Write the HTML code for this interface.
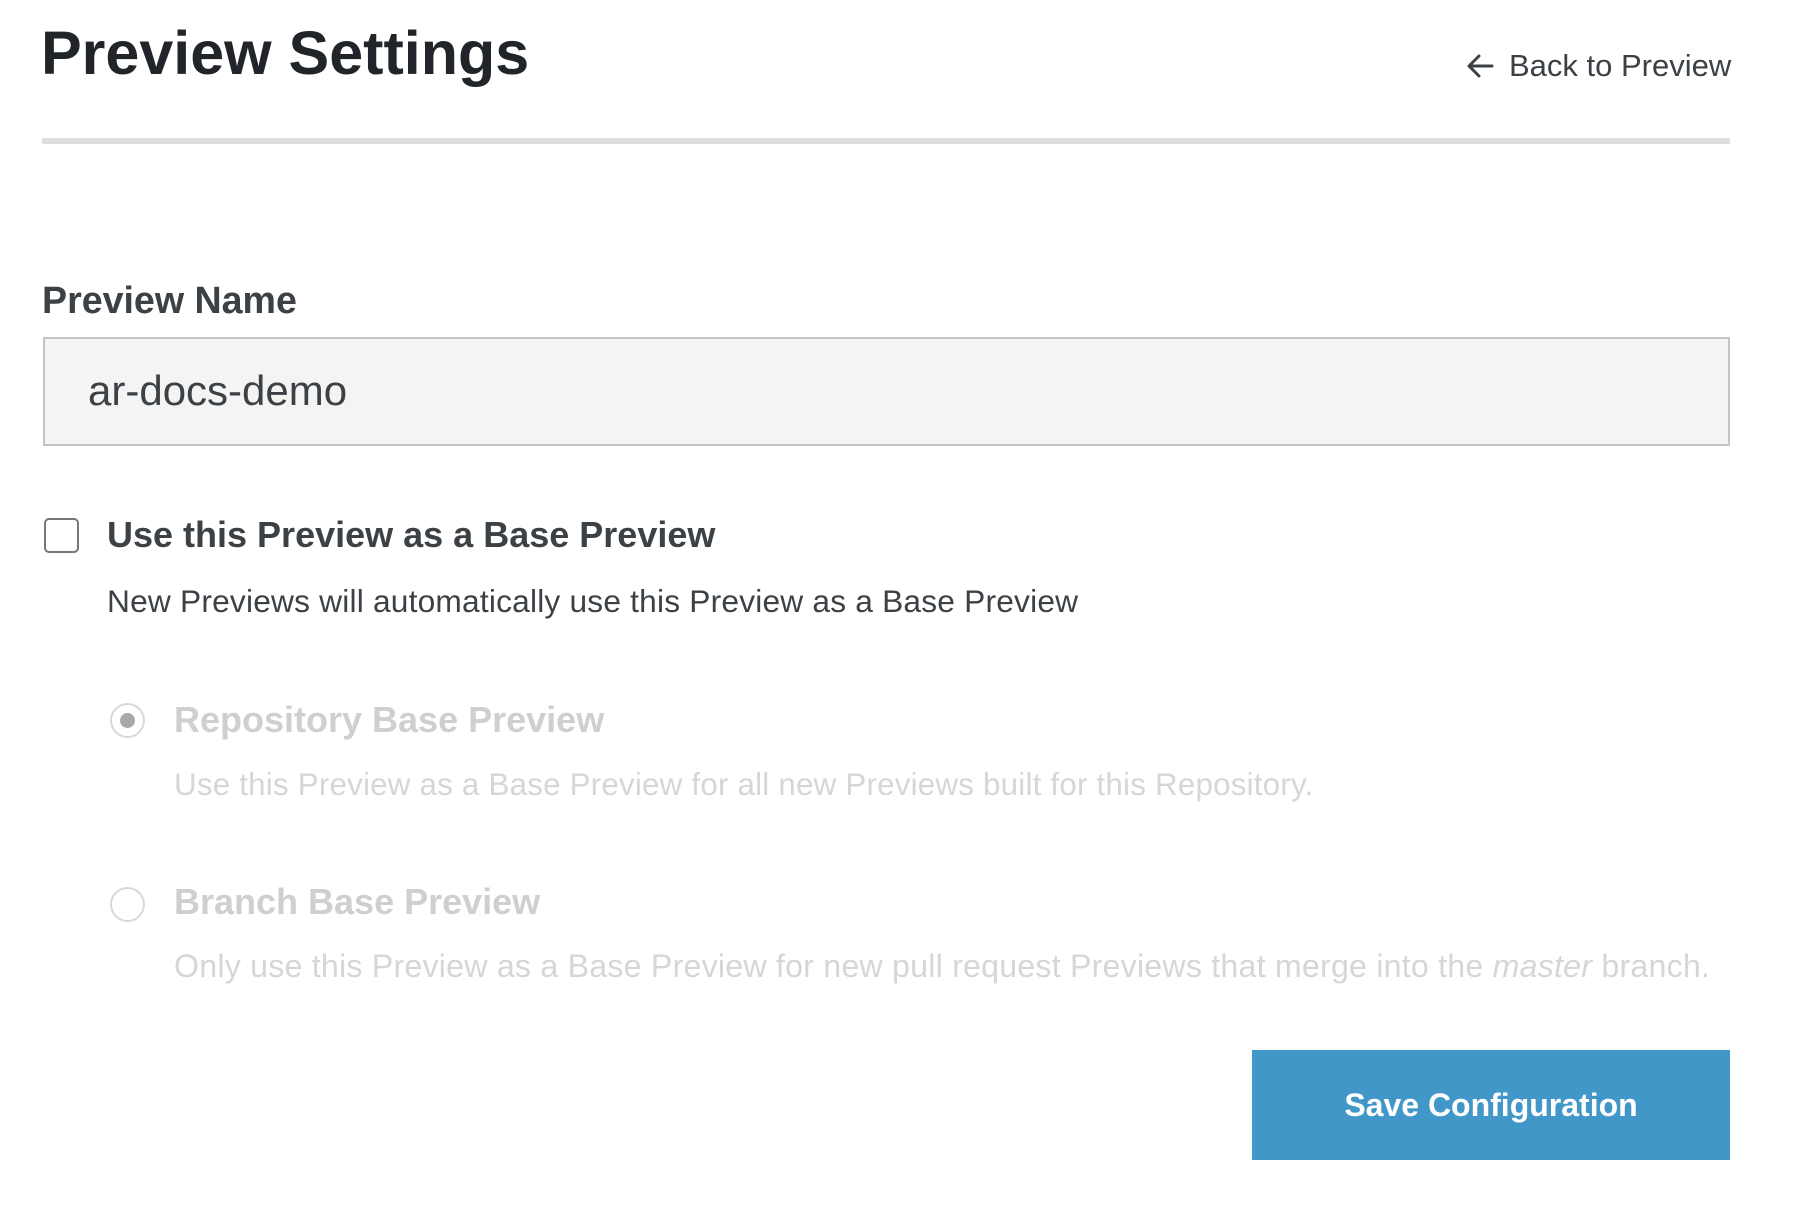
<!DOCTYPE html>
<html><head><meta charset="utf-8"><style>
*{margin:0;padding:0;box-sizing:border-box}
body{width:1804px;height:1210px;background:#fff;position:relative;overflow:hidden;font-family:"Liberation Sans",sans-serif;color:#3c4146}
.a{position:absolute;white-space:nowrap;line-height:1}
</style></head><body>
<div class="a" style="left:41px;top:22px;font-size:61px;font-weight:bold;color:#212529;line-height:62px">Preview Settings</div>
<svg class="a" style="left:1466px;top:53px" width="28" height="26" viewBox="0 0 28 26"><path d="M26 13H4M13 3L3 13l10 10" fill="none" stroke="#3c4146" stroke-width="3" stroke-linecap="round" stroke-linejoin="round"/></svg>
<div class="a" style="left:1509px;top:50px;font-size:31px;line-height:32px">Back to Preview</div>
<div class="a" style="left:42px;top:138px;width:1688px;height:6px;background:#dedede"></div>
<div class="a" style="left:42px;top:281px;font-size:37.6px;font-weight:bold;line-height:38px">Preview Name</div>
<div class="a" style="left:43px;top:337px;width:1687px;height:109px;background:#f4f4f4;border:2px solid #c4c4c4"></div>
<div class="a" style="left:88px;top:370px;font-size:42px;line-height:42px;color:#3c4146">ar-docs-demo</div>
<div class="a" style="left:44px;top:518px;width:35px;height:35px;border:2px solid #777;border-radius:5px"></div>
<div class="a" style="left:107px;top:516px;font-size:36px;font-weight:bold;line-height:38px">Use this Preview as a Base Preview</div>
<div class="a" style="left:107px;top:584px;font-size:31.7px;line-height:34px;letter-spacing:0.2px">New Previews will automatically use this Preview as a Base Preview</div>
<div class="a" style="left:110px;top:703px;width:35px;height:35px;border:2px solid #d8d8d8;border-radius:50%"></div>
<div class="a" style="left:120px;top:713px;width:15px;height:15px;background:#a8a8a8;border-radius:50%"></div>
<div class="a" style="left:174px;top:701px;font-size:36px;font-weight:bold;line-height:38px;color:#cfcfcf">Repository Base Preview</div>
<div class="a" style="left:174px;top:768px;font-size:31.35px;line-height:34px;color:#d6d6d6;letter-spacing:0.2px">Use this Preview as a Base Preview for all new Previews built for this Repository.</div>
<div class="a" style="left:110px;top:887px;width:35px;height:35px;border:2px solid #d8d8d8;border-radius:50%"></div>
<div class="a" style="left:174px;top:883px;font-size:36px;font-weight:bold;line-height:38px;color:#cfcfcf">Branch Base Preview</div>
<div class="a" style="left:174px;top:949px;font-size:32.2px;line-height:34px;color:#d6d6d6;letter-spacing:0.2px">Only use this Preview as a Base Preview for new pull request Previews that merge into the <i>master</i> branch.</div>
<div class="a" style="left:1252px;top:1050px;width:478px;height:110px;background:#4297c9;color:#fff;font-size:32px;font-weight:bold;line-height:110px;text-align:center">Save Configuration</div>
</body></html>
